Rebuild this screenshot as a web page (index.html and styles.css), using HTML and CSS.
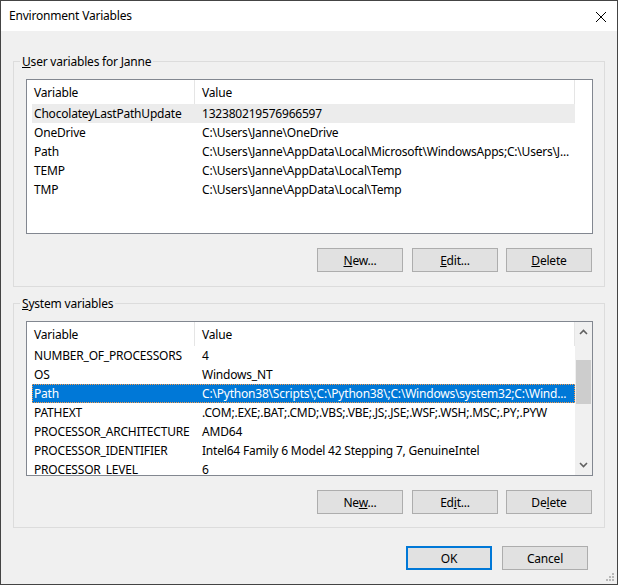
FILE: index.html
```html
<!DOCTYPE html>
<html lang="en">

<head>
    <meta charset="UTF-8">
    <meta name="viewport" content="width=device-width, initial-scale=1.0">
    <title>Environment Variables</title>
    <link rel="stylesheet" href="styles.css">
</head>

<body>
    <div class="window">
        <div class="titlebar">
            <span class="title">Environment Variables</span>
            <svg class="close" width="12" height="12" viewBox="0 0 12 12">
                <path d="M1 1 L11 11 M11 1 L1 11" stroke="#000" stroke-width="1" fill="none" />
            </svg>
        </div>

        <div class="content">
            <fieldset class="group group-user">
                <legend><u>U</u>ser variables for Janne</legend>
                <div class="list">
                    <div class="list-main">
                        <div class="list-head">
                            <div class="col-name">Variable</div>
                            <div class="col-value">Value</div>
                        </div>
                        <div class="row hover">
                            <div class="col-name">ChocolateyLastPathUpdate</div>
                            <div class="col-value">132380219576966597</div>
                        </div>
                        <div class="row">
                            <div class="col-name">OneDrive</div>
                            <div class="col-value">C:\Users\Janne\OneDrive</div>
                        </div>
                        <div class="row">
                            <div class="col-name">Path</div>
                            <div class="col-value">C:\Users\Janne\AppData\Local\Microsoft\WindowsApps;C:\Users\J...</div>
                        </div>
                        <div class="row">
                            <div class="col-name">TEMP</div>
                            <div class="col-value">C:\Users\Janne\AppData\Local\Temp</div>
                        </div>
                        <div class="row">
                            <div class="col-name">TMP</div>
                            <div class="col-value">C:\Users\Janne\AppData\Local\Temp</div>
                        </div>
                    </div>
                    <div class="list-side"></div>
                </div>
                <div class="buttons">
                    <button type="button" class="btn"><u>N</u>ew...</button>
                    <button type="button" class="btn"><u>E</u>dit...</button>
                    <button type="button" class="btn"><u>D</u>elete</button>
                </div>
            </fieldset>

            <fieldset class="group group-system">
                <legend><u>S</u>ystem variables</legend>
                <div class="list">
                    <div class="list-main">
                        <div class="list-head">
                            <div class="col-name">Variable</div>
                            <div class="col-value">Value</div>
                        </div>
                        <div class="row">
                            <div class="col-name">NUMBER_OF_PROCESSORS</div>
                            <div class="col-value">4</div>
                        </div>
                        <div class="row">
                            <div class="col-name">OS</div>
                            <div class="col-value">Windows_NT</div>
                        </div>
                        <div class="row selected">
                            <div class="col-name">Path</div>
                            <div class="col-value">C:\Python38\Scripts\;C:\Python38\;C:\Windows\system32;C:\Wind...</div>
                        </div>
                        <div class="row">
                            <div class="col-name">PATHEXT</div>
                            <div class="col-value">.COM;.EXE;.BAT;.CMD;.VBS;.VBE;.JS;.JSE;.WSF;.WSH;.MSC;.PY;.PYW</div>
                        </div>
                        <div class="row">
                            <div class="col-name">PROCESSOR_ARCHITECTURE</div>
                            <div class="col-value">AMD64</div>
                        </div>
                        <div class="row">
                            <div class="col-name">PROCESSOR_IDENTIFIER</div>
                            <div class="col-value">Intel64 Family 6 Model 42 Stepping 7, GenuineIntel</div>
                        </div>
                        <div class="row">
                            <div class="col-name">PROCESSOR_LEVEL</div>
                            <div class="col-value">6</div>
                        </div>
                    </div>
                    <div class="list-side scrollbar">
                        <svg class="arrow" width="9" height="6" viewBox="0 0 9 6">
                            <path d="M1 5 L4.5 1.5 L8 5" stroke="#606060" stroke-width="1.6" fill="none" />
                        </svg>
                        <div class="track">
                            <div class="thumb"></div>
                        </div>
                        <svg class="arrow" width="9" height="6" viewBox="0 0 9 6">
                            <path d="M1 1 L4.5 4.5 L8 1" stroke="#606060" stroke-width="1.6" fill="none" />
                        </svg>
                    </div>
                </div>
                <div class="buttons">
                    <button type="button" class="btn">Ne<u>w</u>...</button>
                    <button type="button" class="btn">Ed<u>i</u>t...</button>
                    <button type="button" class="btn">De<u>l</u>ete</button>
                </div>
            </fieldset>

            <div class="dialog-buttons">
                <button type="button" class="btn btn-default">OK</button>
                <button type="button" class="btn">Cancel</button>
            </div>
        </div>

        <svg class="grip" width="10" height="10" viewBox="0 0 10 10">
            <rect x="8" y="2" width="2" height="2" fill="#b8b8b8" />
            <rect x="5" y="5" width="2" height="2" fill="#b8b8b8" />
            <rect x="8" y="5" width="2" height="2" fill="#b8b8b8" />
            <rect x="2" y="8" width="2" height="2" fill="#b8b8b8" />
            <rect x="5" y="8" width="2" height="2" fill="#b8b8b8" />
            <rect x="8" y="8" width="2" height="2" fill="#b8b8b8" />
        </svg>
    </div>
</body>

</html>
```

FILE: styles.css
```css
body {
    margin: 0;
    background-color: #f0f0f0;
    font-family: "Noto Sans", "Open Sans", sans-serif;
    font-size: 12px;
    letter-spacing: -0.2px;
    color: #000;
}

.window {
    position: relative;
    width: 618px;
    height: 585px;
    box-sizing: border-box;
    border: 1px solid #444;
    background-color: #f0f0f0;
}

.titlebar {
    display: flex;
    align-items: center;
    justify-content: space-between;
    height: 30px;
    padding: 0 10px 0 8px;
    background-color: #fff;
}

.title {
    font-size: 12px;
    line-height: 16px;
}

.close {
    display: block;
    margin-top: 1px;
}

.content {
    padding: 21px 12px 0 12px;
}

.group {
    margin: 0;
    padding: 9px 11px 14px 12px;
    border: 1px solid #dcdcdc;
    min-width: 0;
}

.group-system {
    margin-top: 7px;
    padding-bottom: 13px;
}

legend {
    margin-left: -6px;
    padding: 2px 2px 0;
    line-height: 16px;
}

.list {
    display: flex;
    height: 155px;
    box-sizing: border-box;
    border: 1px solid #828790;
    background-color: #fff;
    overflow: hidden;
}

.list-main {
    flex: 1;
    min-width: 0;
    padding-left: 5px;
}

.list-side {
    width: 17px;
    flex-shrink: 0;
}

.list-head {
    display: flex;
    height: 24px;
}

.list-head .col-name,
.list-head .col-value {
    display: flex;
    align-items: center;
    border-right: 1px solid #e5e5e5;
}

.row {
    display: flex;
    height: 19px;
    align-items: center;
    box-sizing: border-box;
}

.col-name {
    width: 163px;
    flex-shrink: 0;
    padding-left: 2px;
    box-sizing: border-box;
    white-space: nowrap;
    overflow: hidden;
}

.col-value {
    flex: 1;
    min-width: 0;
    padding-left: 7px;
    white-space: nowrap;
    overflow: hidden;
}

.row.hover {
    background-color: #ececec;
}

.row.selected {
    background-color: #0078d7;
    color: #fff;
    outline: 1px dotted #f59a4c;
    outline-offset: -1px;
}

.scrollbar {
    display: flex;
    flex-direction: column;
    align-items: center;
    background-color: #f0f0f0;
}

.scrollbar .arrow {
    display: block;
    margin: 7px 0;
}

.track {
    flex: 1;
    width: 100%;
    padding-top: 18px;
    box-sizing: border-box;
}

.thumb {
    height: 44px;
    margin: 0 1px;
    background-color: #cdcdcd;
}

.buttons {
    display: flex;
    justify-content: flex-end;
    gap: 8px;
    margin-top: 14px;
    margin-right: 1px;
}

.buttons .btn:first-child {
    margin-right: 1px;
}

.btn {
    width: 86px;
    height: 24px;
    padding: 0;
    border: 1px solid #adadad;
    background-color: #e1e1e1;
    font-family: "Noto Sans", "Open Sans", sans-serif;
    font-size: 12px;
    letter-spacing: -0.2px;
    color: #000;
}

.btn-default {
    border: 2px solid #0078d7;
}

.dialog-buttons {
    display: flex;
    justify-content: flex-end;
    gap: 10px;
    margin-top: 18px;
    padding-right: 17px;
}

.grip {
    position: absolute;
    right: 3px;
    bottom: 3px;
}
```
